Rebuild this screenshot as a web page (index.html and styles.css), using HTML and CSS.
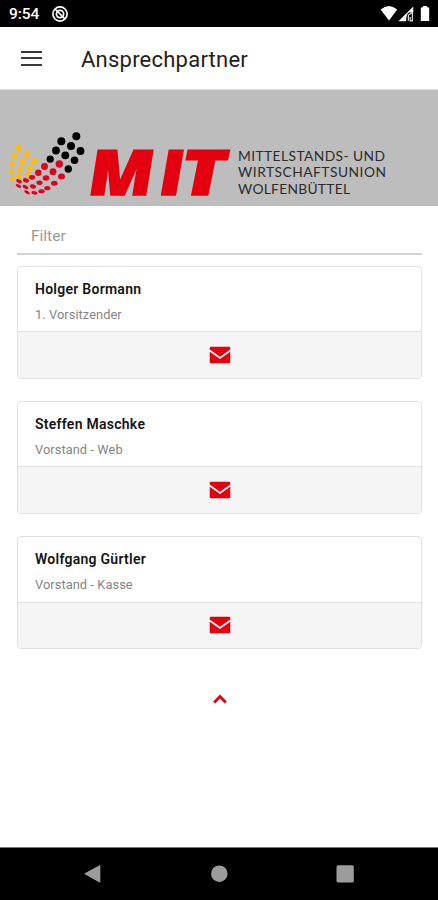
FILE: index.html
```html
<!DOCTYPE html>
<html lang="de">
<head>
<meta charset="utf-8">
<title>Ansprechpartner</title>
<link rel="stylesheet" href="styles.css">
</head>
<body>
<svg class="defs" width="0" height="0">
  <symbol id="mail" viewBox="0 0 22 18">
    <path d="M2 0.7H20Q21.3 .7 21.3 2V3.5L11 10.8 .7 3.5V2Q.7 .7 2 .7ZM.7 5.8L11 13 21.3 5.8V16Q21.3 17.3 20 17.3H2Q.7 17.3 .7 16Z"/>
  </symbol>
</svg>
<div class="screen">
  <div class="status">
    <span class="time">9:54</span>
    <svg class="dnd" width="18" height="18" viewBox="0 0 18 18"><circle cx="9" cy="9" r="7.1"/><circle cx="9" cy="9" r="3.6"/><path d="M4 4L14 14"/></svg>
    <svg class="signals" width="52" height="18" viewBox="0 0 52 18">
      <path d="M.6 4.6Q9 -2.5 17.2 4.6L9 15.5Z"/>
      <path d="M18.4 16.3L33.3 1.5V7.5H29Q26 9 26.2 16.3Z"/>
      <path d="M28.4 15.8V10L32.4 7.6V15.8H30.2V12" class="cell"/>
      <path d="M40.8 3.5Q40.8 2.2 42.3 2.2H43V1H47V2.2H47.8Q49.2 2.2 49.2 3.5V16H40.8Z"/>
    </svg>
  </div>
  <header class="bar">
    <div class="menu"><i></i><i></i><i></i></div>
    <h1>Ansprechpartner</h1>
  </header>
  <div class="banner">
    <svg width="438" height="116" viewBox="0 90 438 116">
      <g fill="#fdbd10">
        <circle cx="18.7" cy="147.7" r="3.2"/><circle cx="27" cy="154.5" r="3.1"/><circle cx="34.5" cy="161" r="3.1"/>
        <circle cx="14.3" cy="155.8" r="3"/><circle cx="22.5" cy="162.3" r="3"/><circle cx="30" cy="168.2" r="2.9"/>
        <circle cx="12" cy="163.8" r="2.9"/><circle cx="20" cy="170" r="2.8"/><circle cx="28" cy="174.6" r="2.6"/>
        <ellipse cx="11.2" cy="171.5" rx="2.6" ry="2.3"/><ellipse cx="18.7" cy="176.5" rx="2.6" ry="2.2"/><ellipse cx="12.5" cy="178.5" rx="2.4" ry="2.2"/>
      </g>
      <g fill="#e2001a">
        <circle cx="59.3" cy="164" r="3.7"/><circle cx="44.5" cy="166.5" r="3.4"/><circle cx="53" cy="171.7" r="3.4"/><circle cx="38.3" cy="172.7" r="3.2"/>
        <ellipse cx="61.5" cy="176.6" rx="3.5" ry="3"/><ellipse cx="46" cy="178" rx="3.3" ry="2.7"/><ellipse cx="32" cy="177.3" rx="3.1" ry="2.4"/><ellipse cx="54.3" cy="183.3" rx="3.3" ry="2.5"/>
        <ellipse cx="39.5" cy="182.7" rx="3.1" ry="2.2"/><ellipse cx="26" cy="180.4" rx="3.1" ry="2.1" transform="rotate(18 26 180.4)"/><ellipse cx="47.3" cy="188.2" rx="3.1" ry="2.1"/><ellipse cx="33" cy="186.5" rx="3.1" ry="2" transform="rotate(15 33 186.5)"/>
        <ellipse cx="19" cy="181.2" rx="3.1" ry="1.8" transform="rotate(25 19 181.2)"/><ellipse cx="25.5" cy="187" rx="3.2" ry="1.7" transform="rotate(25 25.5 187)"/><ellipse cx="18.5" cy="186" rx="3" ry="1.5" transform="rotate(25 18.5 186)"/><ellipse cx="41.5" cy="191.3" rx="3.1" ry="2"/><ellipse cx="34.5" cy="192.8" rx="3.1" ry="1.7" transform="rotate(15 34.5 192.8)"/><ellipse cx="27" cy="192.3" rx="3.1" ry="1.5" transform="rotate(28 27 192.3)"/>
      </g>
      <g fill="#000">
        <circle cx="76.3" cy="136.3" r="4"/><circle cx="61.3" cy="141.2" r="4"/><circle cx="71" cy="146" r="4"/><circle cx="80.5" cy="151" r="3.9"/><circle cx="56" cy="150.5" r="3.9"/><circle cx="65.3" cy="155.3" r="3.9"/><circle cx="74.5" cy="160.3" r="3.8"/><circle cx="50.2" cy="159.2" r="3.6"/><circle cx="68.3" cy="169" r="3.7"/>
      </g>
      <g class="mit">
        <text transform="translate(90 194.5) skewX(5) scale(1.16 1)">M</text>
        <text transform="translate(160.5 194.5) skewX(4) scale(1.14 1)">I</text>
        <text transform="translate(182.5 194.5) skewX(4) scale(1.3 1)">T</text>
      </g>
      <g class="claim">
        <text x="238" y="160.8" textLength="147">MITTELSTANDS- UND</text>
        <text x="238" y="177.3" textLength="148">WIRTSCHAFTSUNION</text>
        <text x="238" y="194" textLength="112">WOLFENBÜTTEL</text>
      </g>
    </svg>
  </div>
  <main>
    <div class="filter">Filter</div>
    <section class="card"><div class="info"><h2>Holger Bormann</h2><p>1. Vorsitzender</p></div><div class="foot"><svg width="22" height="18"><use href="#mail"/></svg></div></section>
    <section class="card"><div class="info"><h2>Steffen Maschke</h2><p>Vorstand - Web</p></div><div class="foot"><svg width="22" height="18"><use href="#mail"/></svg></div></section>
    <section class="card"><div class="info"><h2>Wolfgang Gürtler</h2><p>Vorstand - Kasse</p></div><div class="foot"><svg width="22" height="18"><use href="#mail"/></svg></div></section>
    <svg class="up" width="16" height="12" viewBox="0 0 16 12"><path d="M2.2 9.4L8 3.6 13.8 9.4"/></svg>
  </main>
  <nav class="nav">
    <svg width="438" height="52" viewBox="0 848 438 52"><path d="M84 873.7L99.5 865.3Q100.3 865 100.3 866V882Q100.3 883 99.5 882.6Z"/><circle cx="219.3" cy="873.7" r="8.3"/><rect x="336.5" y="865.3" width="17.3" height="17.3" rx="1.5"/></svg>
  </nav>
</div>
</body>
</html>
```
FILE: styles.css
```css
* { box-sizing: border-box; margin: 0; padding: 0; }
body { background: #fff; font-family: Roboto, sans-serif; }
.defs { display: block; }
svg { display: block; overflow: visible; }
.screen { width: 438px; height: 900px; display: flex; flex-direction: column; overflow: hidden; }
.status { height: 27px; flex: none; background: #000; color: #fff; display: flex; align-items: center; padding: 1px 13px 0 9px; }
.time { font-size: 15.5px; font-weight: 500; width: 42px; letter-spacing: -.1px; }
.dnd { fill: none; stroke: #fff; stroke-width: 1.7; }
.signals { fill: #fff; margin-left: auto; margin-right: -7px; }
.cell { fill: none; stroke: #ddd; stroke-width: 1.2; }
.bar { height: 63px; flex: none; display: flex; align-items: center; padding: 2px 0 0 21px; border-bottom: 1px solid #dcdcdc; }
.menu { width: 21px; height: 15px; display: flex; flex-direction: column; justify-content: space-between; margin-top: -2px; }
.menu i { height: 2px; background: #3a3a3a; }
h1 { margin-left: 39px; font-size: 22px; font-weight: 400; color: #222; letter-spacing: .23px; padding-top: 1px; }
.banner { height: 116px; flex: none; background: #bdbdbd; }
.mit { font: italic 800 63px "Open Sans", sans-serif; fill: #e3000f; stroke: #e3000f; stroke-width: 1.3; }
.claim { font: 400 13.8px Lato, sans-serif; fill: #2c2c2c; }
main { flex: 1; padding: 0 16px 0 17px; }
.filter { height: 49px; line-height: 60px; padding-left: 14px; font-size: 15.5px; color: #999; border-bottom: 2px solid #d2d2d2; margin-bottom: 11px; }
.card { height: 113.3px; border: 1.5px solid #e1e1e1; border-radius: 4px; overflow: hidden; margin-bottom: 21.8px; display: flex; flex-direction: column; }
.info { height: 64.4px; padding: 13.2px 0 0 17px; }
h2 { font-size: 14px; line-height: 18px; font-weight: 600; color: #151515; letter-spacing: .26px; }
p { font-size: 12.8px; line-height: 16px; margin-top: 8.4px; color: #858585; letter-spacing: .08px; }
.foot { flex: 1; border-top: 1.5px solid #e1e1e1; background: #f5f5f5; display: flex; align-items: center; justify-content: center; fill: #e3000f; padding-bottom: 1px; }
.up { margin: 44px auto 0; fill: none; stroke: #e3000f; stroke-width: 2.8; }
.nav { height: 53px; flex: none; background: #000; border-top: 1px solid #777; fill: #9c9c9c; }
```
